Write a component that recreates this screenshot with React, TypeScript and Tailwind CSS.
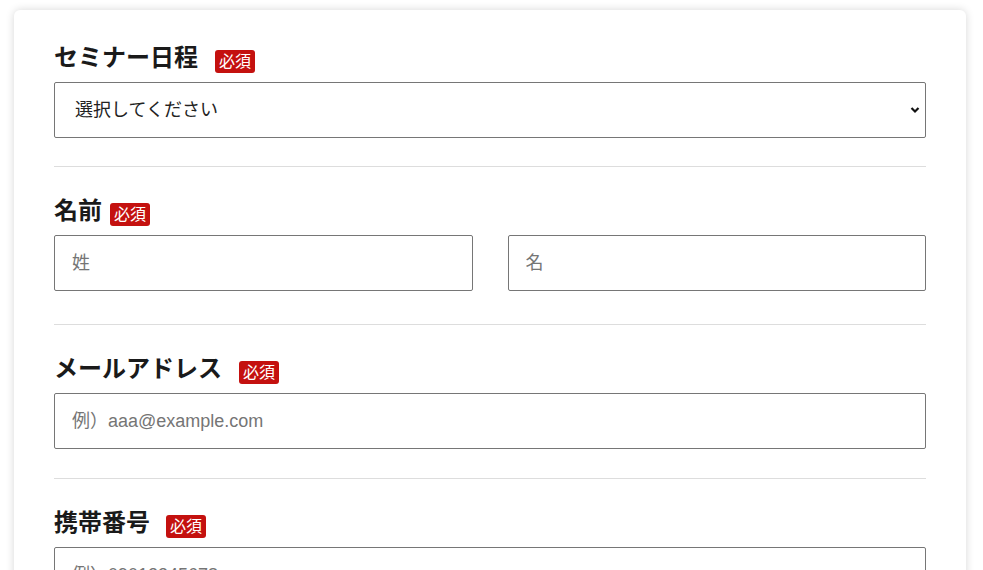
import { ReactNode } from "react";

const font = { fontFamily: '"Liberation Sans", "Noto Sans CJK JP", sans-serif' };

const Badge = ({ className = "" }: { className?: string }) => (
  <span
    className={`mt-[8px] h-[23px] w-[40px] text-center rounded-[3px] bg-[#c4110f] text-white text-[16px] leading-[23px] font-normal ${className}`}
  >
    必須
  </span>
);

const Field = ({
  label,
  gap,
  children,
  className = "",
}: {
  label: string;
  gap: string;
  children: ReactNode;
  className?: string;
}) => (
  <div className={className}>
    <div className="flex items-start mb-2">
      <span className="text-[24px] leading-[32px] font-bold text-[#1a1a1a]">{label}</span>
      <Badge className={gap} />
    </div>
    {children}
  </div>
);

const inputCls =
  "w-full h-[56px] border border-[#767676] rounded-[2px] px-[17px] text-[18px] text-[#222] placeholder:text-[#757575] outline-none bg-white";

export default function App() {
  return (
    <div className="min-h-screen bg-white pt-[10px]" style={font}>
      <div className="ml-[14px] w-[952px] rounded-[6px] bg-white shadow-[0_0_8px_rgba(0,0,0,0.16)] px-[40px] pt-[32px] pb-[40px]">
        {/* seminar */}
        <Field label="セミナー日程" gap="ml-[17px]" className="pb-[28px] border-b border-[#dddddd]">
          <div className="relative">
            <select className={`${inputCls} appearance-none pl-[20px] text-[#111]`} defaultValue="">
              <option value="">選択してください</option>
            </select>
            <svg
              className="absolute right-[6px] top-[24px] pointer-events-none"
              width="10"
              height="8"
              viewBox="0 0 10 8"
            >
              <path d="M1.5 2 L5 5.5 L8.5 2" fill="none" stroke="#111" strokeWidth="2.2" />
            </svg>
          </div>
        </Field>

        {/* name */}
        <Field label="名前" gap="ml-[8px]" className="pt-[28px] pb-[33px] border-b border-[#dddddd]">
          <div className="grid grid-cols-2 gap-[35px]">
            <input className={inputCls} placeholder="姓" />
            <input className={inputCls} placeholder="名" />
          </div>
        </Field>

        {/* email */}
        <Field label="メールアドレス" gap="ml-[17px]" className="pt-[28px] pb-[29px] border-b border-[#dddddd]">
          <input className={inputCls} placeholder="例）aaa@example.com" />
        </Field>

        {/* phone */}
        <Field label="携帯番号" gap="ml-[16px]" className="pt-[28px]">
          <input className={inputCls} placeholder="例）09012345678" />
        </Field>
      </div>
    </div>
  );
}
